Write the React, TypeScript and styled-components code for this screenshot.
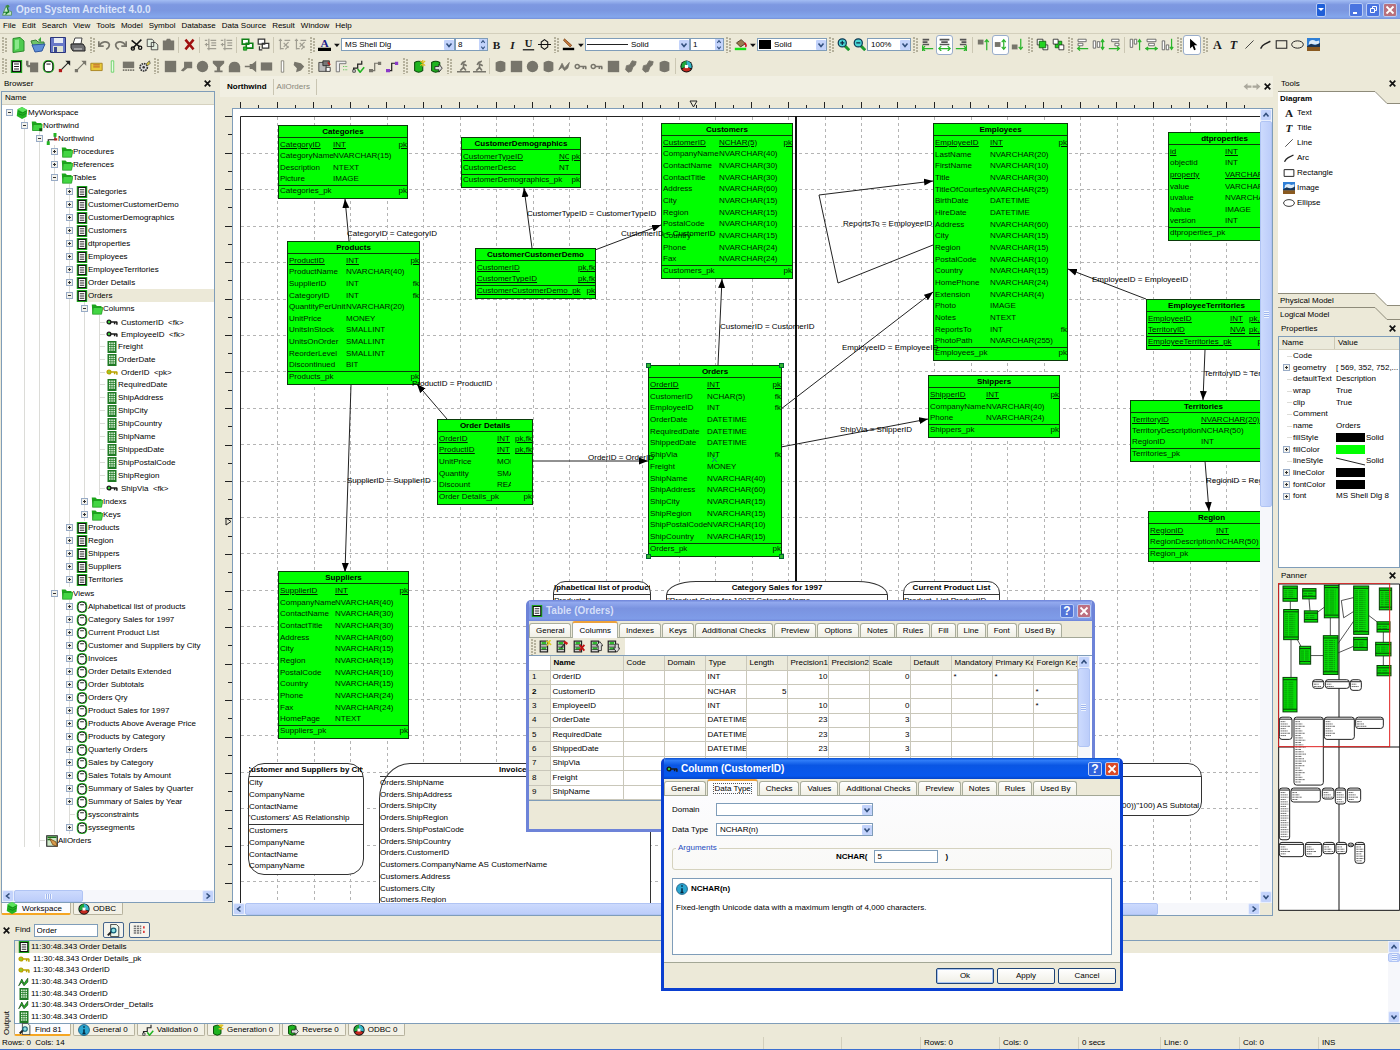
import React from "react";
import styled, { createGlobalStyle, css } from "styled-components";

/* ---------- theme ---------- */
const FONT = `"Liberation Sans", Arial, sans-serif`;
const TEXT = "8px";
const BEIGE = "#ece9d8";
const EDGE = "#7f9db9";
const LIME = "#00ff00";
const GREY = "#77756b";

const Global = createGlobalStyle`
  * { box-sizing: border-box; }
  body { margin: 0; background: ${BEIGE}; }
  button, input, select { font: inherit; color: inherit; margin: 0; padding: 0; border: 0; background: none; border-radius: 0; }
  ul { list-style: none; margin: 0; padding: 0; }
`;

const Shell = styled.div`
  display: flex;
  flex-direction: column;
  height: 100vh;
  min-width: 1000px;
  overflow: hidden;
  position: relative;
  background: ${BEIGE};
  border-bottom: 1px solid #3c6fd0;
  color: #000;
  font: ${TEXT} / 12px ${FONT};
  white-space: nowrap;
`;

/* ---------- icons ---------- */
const sheet = (
  <>
    <path d="M1.500 1.500h9v13h-9z" fill="#fff" stroke="#222" strokeWidth="1.500" />
    <path d="M3 2.500h6v3H3zM3 9h6v3H3z" fill="#2fb62f" />
    <path d="M2 6h8M2 8.500h8M2 12h8" stroke="#222" />
  </>
);
const keyShape = (body: string, head: string) => (
  <>
    <circle cx="4" cy="8" r="2.500" fill={head} stroke={body} strokeWidth="1.800" />
    <path d="M6.500 8H15M14.500 8v3.500M11.500 8v3" stroke={body} strokeWidth="2" fill="none" />
  </>
);
const letter = (ch: string, opts: { italic?: boolean; size?: number; y?: number; fill?: string } = {}) => (
  <text
    x="8"
    y={opts.y || 13}
    textAnchor="middle"
    fontFamily="Liberation Serif, Times New Roman, serif"
    fontWeight="bold"
    fontStyle={opts.italic ? "italic" : "normal"}
    fontSize={opts.size || 15}
    fill={opts.fill || "#1a1a1a"}
  >
    {ch}
  </text>
);

const glyphs: Record<string, React.ReactNode> = {
  logo: (
    <>
      <path d="M2 15L7 2l3 7 4 1v5z" fill="#bfe8c4" stroke="#4b8a52" />
      <path d="M8 3l2 7-4 4M3 11h8" stroke="#147a24" fill="none" strokeWidth="1.500" />
      <circle cx="9" cy="3" r="2" fill="#3b8d44" />
    </>
  ),
  newDoc: (
    <>
      <path d="M3 1.500l7-1L14 4v10l-11 1.500z" fill="#4fcb4f" stroke="#2c8a2c" />
      <path d="M5 3l4-.5v9L5 13z" fill="#8be88b" />
    </>
  ),
  open: (
    <>
      <path d="M1 4l5-1 2 2h6v4H3z" fill="#6fc46a" stroke="#3a7d3a" />
      <path d="M8 3l3-3v5z" fill="#39a839" />
      <path d="M5 15L2 8l13-1-3 7z" fill="#5f8fd8" stroke="#2f57a0" />
    </>
  ),
  save: (
    <>
      <path d="M.5.5h15v15H.5z" fill="#6878c8" stroke="#2b367c" />
      <path d="M4 1h9v5H4z" fill="#e8ecf4" />
      <path d="M3 9h10v6H3z" fill="#dfe3d2" />
      <path d="M4 10h3v5H4z" fill="#3c4a90" />
    </>
  ),
  print: (
    <>
      <path d="M5 1h7l-1 6H3z" fill="#fff" stroke="#444" />
      <path d="M1 7h12l2 3v4H3l-2-3z" fill="#6f6f72" stroke="#222" />
      <path d="M4 12h8" stroke="#d8d8d8" />
    </>
  ),
  undo: <path d="M1 4v6h6M2 9c2-5 10-6 12-1 0 3-2 5-4 6" stroke={GREY} strokeWidth="2" fill="none" />,
  redo: <path d="M15 4v6H9M14 9C12 4 4 3 2 8c0 3 2 5 4 6" stroke={GREY} strokeWidth="2" fill="none" />,
  cut: (
    <>
      <path d="M2 3l10 8M3 13L14 2" stroke="#111" strokeWidth="1.800" />
      <circle cx="3.500" cy="13" r="2" fill="none" stroke="#111" strokeWidth="1.600" />
      <circle cx="12.500" cy="12" r="2" fill="none" stroke="#111" strokeWidth="1.600" />
    </>
  ),
  copy: <path d="M1.500 1.500h6l2 2v7h-8zM6.500 5.500h5l3 3v6h-8z" fill="#e4efe0" stroke="#333" />,
  paste: <path d="M1 3h4l1-2h4l1 2h4v12H1z" fill={GREY} />,
  del: <path d="M3 2l10 12M13 2L3 14" stroke="#a01010" strokeWidth="3" />,
  indent: <path d="M1 3h3M1 8h5M3 6v4M8 3h7M9 6h6M9 9h6M4 13h11M6 1v14" stroke="#a09e92" strokeWidth="1.500" />,
  winGreen: (
    <>
      <path d="M1.500 1.500h8v6h-8zM6.500 6.500h8v6h-8z" fill="#fff" stroke="#108018" strokeWidth="2" />
      <path d="M3 11v4h4v-4z" fill="#29c029" stroke="#108018" />
    </>
  ),
  winWhite: <path d="M1.500 1.500h8v6h-8zM6.500 6.500h8v6h-8zM3 10v4.500h3.500" fill="#fff" stroke="#333" strokeWidth="1.500" />,
  outline: <path d="M1 3h4M3 1v13M3 13h4M9 14l4-4M8 3h7M7 6l6 6M13 5L7 11" stroke="#a09e92" strokeWidth="1.500" fill="none" />,
  fontColor: (
    <>
      {letter("A", { size: 14, y: 11, fill: "#1b1b8a" })}
      <path d="M0 12h16v4H0z" fill="#000" />
    </>
  ),
  bold: letter("B", { size: 14 }),
  italic: letter("I", { size: 14, italic: true }),
  underline: (
    <>
      {letter("U", { size: 13, y: 11 })}
      <path d="M1 14.500h14" stroke="#111" strokeWidth="1.500" />
    </>
  ),
  strike: <path d="M0 8h16M8 2l4 3v6l-4 3-4-3V5z" stroke="#111" strokeWidth="1.300" fill="none" />,
  brush: (
    <>
      <path d="M3 1l9 8-2 2-8-8z" fill="#c77a3c" stroke="#7c4417" />
      <path d="M1 12h14v3H1z" fill="#000" />
    </>
  ),
  bucket: (
    <>
      <path d="M3 6l6-4 5 5-6 4z" fill="#9b7a52" stroke="#3e2b14" />
      <path d="M13 6q3 3 1 5" stroke="#c12" strokeWidth="2" fill="none" />
      <path d="M1 12h14v3H1z" fill="#18e018" />
    </>
  ),
  zoomIn: (
    <>
      <path d="M10 10l5 5" stroke="#1d9a2e" strokeWidth="3.500" />
      <circle cx="6.500" cy="6" r="5" fill="#49d6d6" stroke="#0d3550" strokeWidth="1.500" />
      <path d="M4 6h5M6.500 3.500v5" stroke="#0d2540" strokeWidth="1.500" />
    </>
  ),
  zoomOut: (
    <>
      <path d="M10 10l5 5" stroke="#1d9a2e" strokeWidth="3.500" />
      <circle cx="6.500" cy="6" r="5" fill="#49d6d6" stroke="#0d3550" strokeWidth="1.500" />
      <path d="M4 6h5" stroke="#0d2540" strokeWidth="1.500" />
    </>
  ),
  txtLeft: <><path d="M2 2h8M2 5h6M2 8h8" stroke="#555" strokeWidth="2" /><path d="M15 13H2M5 10l-3 3 3 3M2 9v7" stroke="#2bb52b" strokeWidth="1.500" fill="none" /></>,
  txtMid: <><path d="M2 2h12M4 5h8M2 8h12" stroke="#555" strokeWidth="2" /><path d="M1 13h14M4 10l-3 3 3 3M12 10l3 3-3 3" stroke="#2bb52b" strokeWidth="1.500" fill="none" /></>,
  txtRight: <><path d="M6 2h8M8 5h6M6 8h8" stroke="#555" strokeWidth="2" /><path d="M1 13h13M11 10l3 3-3 3M14 9v7" stroke="#2bb52b" strokeWidth="1.500" fill="none" /></>,
  vTop: <><path d="M1 2h7v6H1z" fill={GREY} /><path d="M12 15V2M9.500 5L12 2l2.500 3" stroke="#2bb52b" strokeWidth="1.500" fill="none" /></>,
  vMid: <><path d="M1 5h7v6H1z" fill={GREY} /><path d="M12 14V2M9.500 5L12 2l2.500 3M9.500 11l2.500 3 2.500-3" stroke="#2bb52b" strokeWidth="1.500" fill="none" /></>,
  vBot: <><path d="M1 8h7v6H1z" fill={GREY} /><path d="M12 1v13M9.500 11l2.500 3 2.500-3" stroke="#2bb52b" strokeWidth="1.500" fill="none" /></>,
  front: <><path d="M1.500 1.500h7v7h-7zM8.500 8.500h6v6h-6z" fill="#fff" stroke="#222" /><path d="M4 4h8v8H4z" fill="#22d322" stroke="#0d5c0d" /></>,
  back: <><path d="M4 4h8v8H4z" fill="#22d322" stroke="#0d5c0d" /><path d="M1.500 1.500h6v6h-6zM8.500 8.500h6v6h-6z" fill="#fff" stroke="#222" /></>,
  aLeft: <><path d="M2.500 1.500h10v3h-10zM2.500 6.500h6v3h-6z" fill="#fff" stroke="#555" /><path d="M15 13H2M5 10.500L2 13l3 2.500" stroke="#2bb52b" strokeWidth="1.500" fill="none" /></>,
  aMidH: <><path d="M1.500 3.500h3v9h-3zM6.500 4.500h3v7h-3z" fill="#fff" stroke="#555" /><path d="M13 14V2M11 5l2-3 2 3M11 11l2 3 2-3" stroke="#2bb52b" strokeWidth="1.500" fill="none" /></>,
  aRight: <><path d="M4.500 1.500h9v3h-9zM8.500 6.500h5v3h-5z" fill="#fff" stroke="#555" /><path d="M1 13h13M11 10.500l3 2.500-3 2.500" stroke="#2bb52b" strokeWidth="1.500" fill="none" /></>,
  aTop: <><path d="M1.500 1.500h3v10h-3zM6.500 1.500h3v6h-3z" fill="#fff" stroke="#555" /><path d="M13 15V2M11 5l2-3 2 3" stroke="#2bb52b" strokeWidth="1.500" fill="none" /></>,
  aCenter: <><path d="M2.500 1.500h11v3h-11zM4.500 6.500h7v3h-7z" fill="#fff" stroke="#555" /><path d="M1 13h14M4 11l-3 2 3 2M12 11l3 2-3 2" stroke="#2bb52b" strokeWidth="1.500" fill="none" /></>,
  aBottom: <><path d="M1.500 3.500h3v11h-3zM6.500 8.500h3v6h-3z" fill="#fff" stroke="#555" /><path d="M13 1v13M11 11l2 3 2-3" stroke="#2bb52b" strokeWidth="1.500" fill="none" /></>,
  pointer: <path d="M5 1v12l3-3 2 5 2-1-2-5h4z" fill="#000" />,
  text: letter("A"),
  title: letter("T", { italic: true }),
  line: <path d="M3 13L13 3" stroke="#222" />,
  arc: <path d="M2 13q2-4 5-5.500t7-3.500" stroke="#222" strokeWidth="1.800" fill="none" />,
  rect: <path d="M1.500 3.500h13v9h-13z" stroke="#222" strokeWidth="1.300" fill="none" />,
  ellipse: <ellipse cx="8" cy="8" rx="7.200" ry="4.500" stroke="#222" strokeWidth="1.200" fill="none" />,
  image: (
    <>
      <path d="M0 0h16v16H0z" fill="#2f7fd6" />
      <path d="M3 4q4-3 8 0l4-1v5H2z" fill="#dcebf8" />
      <path d="M0 10l5-3 5 2 6-3v5H0z" fill="#193454" />
      <path d="M0 11h16v5H0z" fill="#8a5a20" />
    </>
  ),
  table: (
    <>
      <path d="M1 0h14v16H1z" fill="#1ea61e" />
      <path d="M3 2h10v12H3z" fill="#fff" stroke="#111" strokeWidth="1.400" />
      <path d="M5 5h6M5 8h6M5 11h6" stroke="#222" strokeWidth="1.300" />
    </>
  ),
  view: (
    <>
      <rect x="1" y="0" width="14" height="16" rx="6" fill="#2fc42f" />
      <rect x="2.700" y="1.500" width="10.600" height="13" rx="4.500" fill="#fff" stroke="#111" strokeWidth="1.300" />
      <path d="M5.500 5h5" stroke="#222" strokeWidth="1.300" />
    </>
  ),
  folder: (
    <>
      <path d="M1 2h5l2 2h6v10H2z" fill="#1da51d" />
      <path d="M3 6h13l-2 9H2z" fill="#43d543" stroke="#128a12" strokeWidth=".8" />
    </>
  ),
  project: (
    <>
      <path d="M1 2h5l2 2h6v10H2z" fill="#1da51d" />
      <path d="M3 6h12l-1 8H2z" fill="#43d543" stroke="#128a12" strokeWidth=".8" />
      <path d="M11 11h4v4h-4z" fill="#0b4d0b" />
    </>
  ),
  cube: (
    <>
      <path d="M8 0l7 4-1 9-6 3-7-4 1-9z" fill="#22b422" />
      <path d="M8 0l7 4-6 3-7-4z" fill="#5be35b" />
      <path d="M3 9l6 2 5-3M3 6l6 2 5-3" stroke="#0d7d16" fill="none" />
    </>
  ),
  model: (
    <>
      <path d="M3 13V9h9V3" stroke="#222" strokeWidth="1.500" fill="none" />
      <path d="M1 11h4v5H1zM10 0h4v5h-4z" fill="#22b422" />
      <path d="M11 7h4v3h-4z" fill="#b22" />
    </>
  ),
  column: (
    <>
      <path d="M2 0h12v16H2z" fill="#1f7a24" />
      <path d="M4 2h2v2H4zM7 2h2v2H7zM10 2h2v2h-2zM4 5h2v2H4zM7 5h2v2H7zM10 5h2v2h-2zM4 8h2v2H4zM7 8h2v2H7zM10 8h2v2h-2zM4 11h2v2H4zM7 11h2v2H7zM10 11h2v2h-2z" fill="#dff3dc" />
    </>
  ),
  keyBlack: keyShape("#1a1a1a", "#3bcf3b"),
  keyGold: keyShape("#b9a300", "#8fcf2b"),
  keyGrey: keyShape(GREY, BEIGE),
  query: (
    <>
      <path d="M1 1h14v14H1z" fill="#cfe8c8" stroke="#222" strokeWidth="1.500" />
      <path d="M2 3h12M2 6h5" stroke="#187018" strokeWidth="2" />
      <path d="M5 5l8 4 2 6-6-2z" fill="#d99b4c" stroke="#70400f" />
    </>
  ),
  odbc: (
    <>
      <circle cx="8" cy="8" r="7.500" fill="#111" />
      <path d="M8 1a7 7 0 0 0-6 9l4-1 2-4z" fill="#1fa83a" />
      <path d="M8 1a7 7 0 0 1 6 9l-4-1-2-4z" fill="#35b8c8" />
      <path d="M2.500 11.500a7 7 0 0 0 11 0L10 9H6z" fill="#c42a20" />
      <path d="M6 6h4v4H6z" fill="#fff" />
    </>
  ),
  link: <><path d="M3 13L13 3" stroke="#222" strokeWidth="1.300" /><path d="M1 11h4v4H1z" fill="#b01818" /><path d="M9 1h6v6z" fill="#222" /></>,
  linkGrey: <><path d="M3 13L13 3" stroke={GREY} strokeWidth="1.300" /><path d="M1 11h4v4H1zM9 1h6v6z" fill={GREY} /></>,
  tableGrey: <path d="M0 1h3v5h2V3h10v12H5V9H2L0 6z" fill={GREY} />,
  ticket: <><path d="M1 4h14v9H1z" fill="#e8c93a" stroke="#a17a16" /><path d="M4 6h8M4 8.500h8" stroke="#b5402a" /></>,
  bar: <path d="M6.500 1h3v14h-3z" fill="#eaf9e6" stroke="#59cf59" />,
  barGrey: <path d="M6.500 1h3v14h-3z" fill="#fff" stroke={GREY} />,
  gridGrey: <><path d="M1 2h14v8H1z" fill={GREY} /><path d="M1 12.500h14" stroke={GREY} strokeWidth="2" strokeDasharray="2 1" /></>,
  gear: <><circle cx="7" cy="9" r="4.500" fill="#ddd" stroke="#333" strokeWidth="2" strokeDasharray="2 1" /><circle cx="7" cy="9" r="1.500" fill="#333" /><path d="M10 5l4-4 1 3-3 3z" fill="#d8c63a" stroke="#555" /></>,
  gSquare: <path d="M1 1h14v14H1z" fill={GREY} />,
  gFlag: <path d="M5 2h10v8H9l-5 4-3-1 4-4z" fill={GREY} />,
  gCircle: <circle cx="8" cy="8" r="7" fill={GREY} />,
  gFunnel: <path d="M1 1h14v3l-5 5v4h3v2H3v-2h3V9L1 4z" fill={GREY} />,
  gDome: <path d="M1 15V8q1-6 7-6t7 6v7z" fill={GREY} />,
  gStep: <path d="M1 7h6V5h3l5-4v14l-5-4H7V9H1z" fill={GREY} />,
  gWide: <path d="M1 3h14v10H1z" fill={GREY} />,
  gBlob: <path d="M3 2l8 2 4 4-4 5-6 2 1-5-4-4z" fill={GREY} />,
  gCan: <path d="M2 3q6-4 12 0v10q-6 4-12 0z" fill={GREY} />,
  gZig: <path d="M1 12l4-8 3 6 6-7-2 7-4 3-3-4z" fill={GREY} stroke={GREY} />,
  person: <path d="M10 2l-3 1-2 3M8 4v5l-4 4M8 9l3 4M8 5l4 2M0 14.500h16M10 1.500h1" stroke={GREY} strokeWidth="2" fill="none" />,
  bug: <path d="M10 1l5 1-1 4-3 3-2 5-4 1-3-3 1-5 4-1z" fill={GREY} stroke={GREY} />,
  compile: <><path d="M1 3h9v11H1z" fill="#bbb" stroke="#333" /><path d="M6 1h8v6H6z" fill="#777" stroke="#222" /><path d="M10 9h5v5h-5z" fill="#fff" stroke="#222" /><path d="M12 3l3 3" stroke="#b22" strokeWidth="2" /></>,
  rulers: <><path d="M1.500 1.500h12v3h-8v10h-4z" fill="#eee" stroke="#666" /><path d="M10 8h5M10 12h5" stroke="#2bb52b" strokeDasharray="1 1" /></>,
  relCheck: <><path d="M2 14v-4h5V5h5V1" stroke="#222" strokeWidth="1.500" fill="none" /><path d="M1 12h3v3H1z" fill="#fff" stroke="#222" /><path d="M7 11l3 4 5-6" stroke="#22b422" strokeWidth="2" fill="none" /></>,
  relGrey: <><path d="M2 13h5V4h6" stroke={GREY} strokeWidth="1.500" fill="none" /><path d="M0 11h5v4H0zM11 2h4v4h-4z" fill={GREY} /></>,
  relPurple: <><path d="M2 13h5V4h6" stroke="#222" strokeWidth="1.500" fill="none" /><path d="M0 11h5v4H0zM11 2h4v4h-4z" fill="#8a3ac8" /></>,
  dbNew: <><path d="M2 3q5-3 10 0v10q-5 4-10 0z" fill="#1fb31f" stroke="#0b4d0b" strokeWidth="1.300" /><path d="M9 1l6 6M15 1L9 7M12 0v8" stroke="#e0c020" strokeWidth="1.500" /></>,
  dbRev: <><path d="M2 3q5-3 10 0v10q-5 4-10 0z" fill="#1fb31f" stroke="#0b4d0b" strokeWidth="1.300" /><path d="M6 8h5V5l4 5-4 5v-3H6z" fill="#ddd" stroke="#222" /></>,
  zig: <path d="M1 13l4-9 3 6 5-7v5l-5 5-3-5z" fill="#25b325" stroke="#154d15" />,
  info: <><circle cx="8" cy="8" r="7.300" fill="#2ba5cf" stroke="#0d4f78" /><path d="M8 3v2M8 7v5M6 12.500h4" stroke="#05263d" strokeWidth="2" /></>,
  find: <><path d="M4.500.5h7l3 3v12h-10z" fill="#eef7ec" stroke="#222" /><path d="M1 14l5-5" stroke="#222" strokeWidth="2.500" /><circle cx="8" cy="8" r="3" fill="#8fe0e0" stroke="#17607a" strokeWidth="1.500" /></>,
  findCfg: <><path d="M1 3h10M1 6h10M1 9h10M1 12h10" stroke="#777" strokeWidth="2" strokeDasharray="3 1" /><path d="M14.500 3v3M14.500 9v3" stroke="#d22" strokeWidth="2" /></>,
  sheetNew: <>{sheet}<path d="M9 1l6 5M14 0l-4 7" stroke="#e0d020" strokeWidth="1.800" /></>,
  sheetEdit: <>{sheet}<path d="M6 10l6-7" stroke="#333" strokeWidth="1.500" /><path d="M10 2l4 3" stroke="#d01818" strokeWidth="3" /></>,
  sheetDel: <>{sheet}<path d="M8 6l6 7M14 6l-6 7" stroke="#c01010" strokeWidth="2.200" /></>,
  sheetUp: <>{sheet}<path d="M10 13V7H8l4-5 4 5h-2v6z" fill="#ddd" stroke="#222" /></>,
  sheetDown: <>{sheet}<path d="M10 5v5H8l4 5 4-5h-2V5z" fill="#ddd" stroke="#222" /></>,
  close: <path d="M3 3l10 10M13 3L3 13" stroke="#111" strokeWidth="3" />,
  prev: <path d="M15 6H8V2L1 8l7 6v-4h7z" fill="#aaa89c" />,
  next: <path d="M1 6h7V2l7 6-7 6v-4H1z" fill="#aaa89c" />,
  down: <path d="M5 7h7l-3.500 4z" fill="#111" />,
};

const Svg = styled.svg<{ $size: number }>`
  display: block;
  flex: none;
  width: ${(p) => p.$size}px;
  height: ${(p) => p.$size}px;
`;
const Icon = ({ name, size = 14 }: { name: string; size?: number }) => (
  <Svg $size={size} viewBox="0 0 16 16" aria-hidden="true">
    {glyphs[name]}
  </Svg>
);

/* ---------- title and menu ---------- */
const TitleBar = styled.header`
  flex: none;
  height: 19px;
  display: flex;
  align-items: center;
  gap: 3px;
  padding: 0 3px 0 1px;
  background: linear-gradient(#a3bdf3, #7d98e1 25%, #7b97e0 55%, #84a7ec 90%, #7590d8);
`;
const TitleText = styled.h1`
  margin: 0;
  flex: 1;
  font: bold 10px / 14px ${FONT};
  color: #dbe5fa;
`;
const WinButton = styled.button<{ $tone?: string; $w?: number }>`
  width: ${(p) => p.$w || 14}px;
  height: 14px;
  flex: none;
  display: flex;
  align-items: center;
  justify-content: center;
  border: 1px solid #b9ccf5;
  border-radius: 2px;
  background: ${(p) => p.$tone || "#4a74e0"};
`;
const Gap = styled.span<{ $w: number }>`
  flex: none;
  width: ${(p) => p.$w}px;
`;
const MenuBar = styled.nav`
  flex: none;
  height: 14px;
  display: flex;
  align-items: center;
  gap: 6px;
  padding-left: 3px;
`;

/* ---------- tool bars ---------- */
const ToolRow = styled.div<{ $h: number; $line?: boolean }>`
  flex: none;
  height: ${(p) => p.$h}px;
  display: flex;
  align-items: center;
  border-top: 1px solid ${(p) => (p.$line ? "#d3cfbc" : "transparent")};
`;
const Grip = styled.span<{ $w?: number }>`
  flex: none;
  width: ${(p) => p.$w || 8}px;
  height: 16px;
  background: radial-gradient(circle at 1px 1px, #b5b19c 1px, transparent 1px) 2px 0 / 3px 3px repeat-y,
    radial-gradient(circle at 1px 1px, #b5b19c 1px, transparent 1px) 5px 1px / 3px 3px repeat-y;
`;
const Divider = styled.span`
  flex: none;
  width: 1px;
  height: 16px;
  margin: 0 2px;
  background: #cbc7b3;
`;
const ToolButton = styled.button<{ $w?: number; $on?: boolean }>`
  flex: none;
  width: ${(p) => p.$w || 16}px;
  height: 20px;
  display: flex;
  align-items: center;
  justify-content: center;
  ${(p) =>
    p.$on &&
    css`
      background: #fff;
      border: 1px solid #9aaecb;
      border-radius: 3px;
    `}
`;
const Tools = ({ names, w, on }: { names: string; w?: number; on?: string }) => (
  <>
    {names.split(" ").map((n, i) => (
      <ToolButton key={i} $w={w} $on={on === n} aria-label={n}>
        <Icon name={n} size={w === 20 ? 16 : 13} />
      </ToolButton>
    ))}
  </>
);

const Frame = styled.span<{ $w: number }>`
  flex: none;
  display: flex;
  align-items: center;
  width: ${(p) => p.$w}px;
  height: 13px;
  border: 1px solid ${EDGE};
  background: #fff;
  line-height: 11px;
`;
const NativeSelect = styled.select`
  appearance: none;
  flex: 1;
  min-width: 0;
  height: 11px;
  padding-left: 3px;
  line-height: 11px;
`;
const ArrowBox = styled.span`
  flex: none;
  width: 10px;
  height: 10px;
  display: flex;
  align-items: center;
  justify-content: center;
  border-radius: 1px;
  background: #c3d3fb;
`;
const Chevron = ({ turn = 0 }: { turn?: number }) => (
  <svg width="8" height="8" viewBox="0 0 8 8" aria-hidden="true">
    <path d="M1.500 2.500L4 5.500l2.500-3" transform={`rotate(${turn} 4 4)`} fill="none" stroke="#33507e" strokeWidth="1.600" />
  </svg>
);
const Combo = ({ w, label, value, lead }: { w: number; label: string; value: string; lead?: React.ReactNode }) => (
  <Frame $w={w}>
    {lead}
    <NativeSelect aria-label={label} defaultValue={value}>
      <option>{value}</option>
    </NativeSelect>
    <ArrowBox>
      <Chevron />
    </ArrowBox>
  </Frame>
);
const SpinInput = styled.input`
  flex: 1;
  min-width: 0;
  height: 11px;
  padding-left: 2px;
`;
const SpinArrows = styled.span`
  display: flex;
  flex-direction: column;
  align-items: center;
  width: 8px;
  height: 11px;
  background: #c3d3fb;
  overflow: hidden;
  svg { height: 6px; }
`;
const Spin = ({ w, label, value }: { w: number; label: string; value: string }) => (
  <Frame $w={w}>
    <SpinInput aria-label={label} defaultValue={value} />
    <SpinArrows>
      <Chevron turn={180} />
      <Chevron />
    </SpinArrows>
  </Frame>
);
const Swatch = styled.span<{ $c: string; $w?: number }>`
  flex: none;
  width: ${(p) => p.$w || 12}px;
  height: 9px;
  margin-left: ${(p) => (p.$w ? 0 : 1)}px;
  background: ${(p) => p.$c};
`;

/* ---------- scroll bars ---------- */
const ScrollTrack = styled.div<{ $v?: boolean }>`
  flex: none;
  display: flex;
  flex-direction: ${(p) => (p.$v ? "column" : "row")};
  ${(p) => (p.$v ? "width: 12px;" : "height: 12px;")}
  background: #f6f7fb;
`;
const ScrollEnd = styled.button`
  flex: none;
  width: 12px;
  height: 12px;
  display: flex;
  align-items: center;
  justify-content: center;
  border: 1px solid #e9effd;
  border-radius: 2px;
  background: #c3d3fb;
`;
const Thumb = styled.div<{ $v?: boolean; $part: number }>`
  flex: ${(p) => p.$part} 1 0;
  border: 1px solid #b0c4f4;
  border-radius: 2px;
  background: ${(p) =>
    p.$v
      ? "repeating-linear-gradient(#eef4fe 0 1px, #9fb6ee 1px 2px) center / 5px 7px no-repeat, linear-gradient(to right, #ccdafd, #bccdfa)"
      : "repeating-linear-gradient(to right, #eef4fe 0 1px, #9fb6ee 1px 2px) center / 7px 5px no-repeat, linear-gradient(#ccdafd, #bccdfa)"};
`;
const Rest = styled.div<{ $part: number }>`
  flex: ${(p) => p.$part} 1 0;
`;
const ScrollBar = ({ v, part }: { v?: boolean; part: number }) => (
  <ScrollTrack $v={v}>
    <ScrollEnd aria-label="Scroll back">
      <Chevron turn={v ? 180 : 90} />
    </ScrollEnd>
    <Thumb $v={v} $part={part} />
    <Rest $part={100 - part} />
    <ScrollEnd aria-label="Scroll forward">
      <Chevron turn={v ? 0 : -90} />
    </ScrollEnd>
  </ScrollTrack>
);

/* ---------- docks ---------- */
const Main = styled.div`
  flex: 1;
  min-height: 0;
  display: flex;
`;
const LeftDock = styled.aside`
  flex: none;
  width: 216px;
  display: flex;
  flex-direction: column;
  padding: 0 1px 5px;
`;
const DockTitle = styled.h2`
  flex: none;
  height: 15px;
  margin: 0;
  padding: 0 3px;
  display: flex;
  align-items: center;
  justify-content: space-between;
  font: ${TEXT} / 15px ${FONT};
`;
const IconButton = styled.button`
  display: flex;
  align-items: center;
`;
const Dock = ({ title }: { title: string }) => (
  <DockTitle>
    {title}
    <IconButton aria-label={`Close ${title}`}>
      <Icon name="close" size={9} />
    </IconButton>
  </DockTitle>
);
const Panel = styled.div`
  flex: 1;
  min-height: 0;
  display: flex;
  flex-direction: column;
  border: 1px solid ${EDGE};
  background: #fff;
`;
const PanelHead = styled.div`
  flex: none;
  height: 13px;
  display: flex;
  align-items: center;
  padding-left: 3px;
  background: #ebeadb;
  border-bottom: 1px solid #d5d1bf;
`;

/* ---------- tree ---------- */
const TreeScroll = styled.div`
  flex: 1;
  min-height: 0;
  overflow: hidden;
  padding: 1px 0 0 8px;
`;
const Branch = styled.ul<{ $nested?: boolean; $pad?: boolean }>`
  ${(p) =>
    p.$nested &&
    css`
      margin-left: 14px;
      border-left: 1px solid #dcdcd8;
    `}
  ${(p) => p.$pad && "padding: 1px 0;"}
`;
const TreeRow = styled.div<{ $h: number }>`
  display: flex;
  align-items: center;
  height: ${(p) => p.$h}px;
  margin-left: -4px;
`;
const Expander = styled.button`
  flex: none;
  width: 7px;
  height: 7px;
  border: 1px solid #98abc6;
  background: linear-gradient(#333, #333) center / 3px 1px no-repeat, #f3f2ec;
  &[aria-expanded="false"] {
    background: linear-gradient(#333, #333) center / 3px 1px no-repeat, linear-gradient(#333, #333) center / 1px 3px no-repeat, #f3f2ec;
  }
`;
const Twig = styled.span`
  flex: none;
  width: 5px;
  height: 1px;
  margin-right: 1px;
  background: #dcdcd8;
`;
const NodeText = styled.span<{ $sel?: boolean; $key?: boolean }>`
  flex: 1;
  padding-left: ${(p) => (p.$key ? 3 : 0)}px;
  line-height: 13px;
  white-space: pre;
  background: ${(p) => (p.$sel ? BEIGE : "transparent")};
`;
type Item = { t: string; icon: string; leaf?: boolean; sel?: boolean; pad?: boolean; kids?: Item[] };
const list = (icon: string, s: string): Item[] => s.split("|").map((t) => ({ t, icon }));
const col = (t: string): Item => ({
  t,
  icon: t.includes("<fk>") ? "keyBlack" : t.includes("<pk>") ? "keyGold" : "column",
  leaf: true,
});
const tree: Item[] = [
  {
    t: "MyWorkspace", icon: "cube", kids: [
      {
        t: "Northwind", icon: "project", kids: [
          {
            t: "Northwind", icon: "model", kids: [
              ...list("folder", "Procedures|References"),
              {
                t: "Tables", icon: "folder", pad: true, kids: [
                  ...list("table", "Categories|CustomerCustomerDemo|CustomerDemographics|Customers|dtproperties|Employees|EmployeeTerritories|Order Details"),
                  {
                    t: "Orders", icon: "table", sel: true, kids: [
                      {
                        t: "Columns", icon: "folder", pad: true,
                        kids: "CustomerID  <fk>|EmployeeID  <fk>|Freight|OrderDate|OrderID  <pk>|RequiredDate|ShipAddress|ShipCity|ShipCountry|ShipName|ShippedDate|ShipPostalCode|ShipRegion|ShipVia  <fk>".split("|").map(col),
                      },
                      ...list("folder", "Indexs|Keys"),
                    ],
                  },
                  ...list("table", "Products|Region|Shippers|Suppliers|Territories"),
                ],
              },
              {
                t: "Views", icon: "folder", kids: [
                  ...list("view", "Alphabetical list of products|Category Sales for 1997|Current Product List|Customer and Suppliers by City|Invoices|Order Details Extended|Order Subtotals|Orders Qry|Product Sales for 1997|Products Above Average Price|Products by Category|Quarterly Orders|Sales by Category|Sales Totals by Amount|Summary of Sales by Quarter|Summary of Sales by Year"),
                  { t: "sysconstraints", icon: "view", leaf: true },
                  { t: "syssegments", icon: "view" },
                ],
              },
            ],
          },
          { t: "AllOrders", icon: "query", leaf: true },
        ],
      },
    ],
  },
];
const TreeList = ({ items, nested, pad }: { items: Item[]; nested?: boolean; pad?: boolean }) => (
  <Branch $nested={nested} $pad={pad}>
    {items.map((it, i) => {
      const isKey = it.icon.startsWith("key");
      return (
        <li key={i}>
          <TreeRow $h={isKey ? 12 : 13}>
            {it.leaf ? <Gap $w={4} /> : <Expander aria-label={it.t} aria-expanded={!!it.kids} />}
            {it.leaf ? <Twig /> : <Gap $w={3} />}
            <Icon name={it.icon} size={12} />
            <NodeText $sel={it.sel} $key={isKey}>{it.t}</NodeText>
          </TreeRow>
          {it.kids && <TreeList items={it.kids} nested pad={it.pad} />}
        </li>
      );
    })}
  </Branch>
);

/* ---------- bottom tabs ---------- */
const TabStrip = styled.div`
  flex: none;
  height: 12px;
  display: flex;
  gap: 2px;
`;
const BottomTab = styled.button<{ $on?: boolean }>`
  display: flex;
  align-items: center;
  gap: ${(p) => (p.$on ? 4 : 3)}px;
  padding: 0 ${(p) => (p.$on ? 8 : 6)}px 0 4px;
  height: 12px;
  border: 1px solid #b6b29d;
  border-top: 0;
  border-bottom: ${(p) => (p.$on ? "2px solid #f5a623" : "1px solid #b6b29d")};
  border-radius: 0 0 2px 2px;
  background: ${(p) => (p.$on ? "#fcfcfe" : "#f3f1e6")};
  line-height: 11px;
`;

/* ---------- document area ---------- */
const Center = styled.main`
  flex: 1;
  min-width: 0;
  display: flex;
  flex-direction: column;
  margin-right: 5px;
  padding-bottom: 4px;
`;
const DocTabs = styled.div`
  flex: none;
  height: 21px;
  margin-left: 4px;
  display: flex;
  align-items: center;
  padding-right: 1px;
  background: #f1efe2;
`;
const DocTab = styled.button<{ $on?: boolean }>`
  height: 16px;
  padding: 0 6px 0 ${(p) => (p.$on ? 7 : 3)}px;
  border-right: 1px solid #c9c5b2;
  font-weight: ${(p) => (p.$on ? "bold" : "normal")};
  color: ${(p) => (p.$on ? "#000" : "#8a887c")};
`;
const Spacer = styled.span`
  flex: 1;
`;
const Drawing = styled.div`
  flex: 1;
  min-height: 0;
  display: grid;
  grid-template: 11px 1fr / 16px 1fr;
`;
const RulerSvg = styled.svg`
  display: block;
  width: 100%;
  height: 100%;
  overflow: hidden;
`;
const CanvasFrame = styled.div`
  min-width: 0;
  min-height: 0;
  display: grid;
  grid-template: 1fr 12px / 1fr 12px;
  border: 1px solid ${EDGE};
  background: ${BEIGE};
`;
const Viewport = styled.div`
  position: relative;
  overflow: hidden;
  background: #fff;
`;
/* The scene is scrolled so that the sheet's margin shows at the top left. */
const Scene = styled.div`
  position: absolute;
  left: -233px;
  top: -109px;
  width: 1400px;
  height: 1050px;
`;
const SceneSvg = styled.svg`
  position: absolute;
  left: 0;
  top: 0;
`;

const steps = (from: number, to: number, step: number) => {
  const out: number[] = [];
  for (let v = from; v < to; v += step) out.push(Math.round(v) + 0.5);
  return out;
};
const ticks = (max: number, at: (v: number, long: boolean) => string) =>
  steps(8, max, 18.25).map((v, i) => at(v, i % 2 === 0)).join("");

const entityRows = (s: string) => s.split("|").map((r) => r.split(";"));
type Entity = { t: string; x: number; y: number; w: number; h: number; tx: number; tw?: number; rows: string[][]; sel?: boolean; wideKey?: boolean };
const entities: Entity[] = [
  { t: "Categories", x: 278, y: 125, w: 130, h: 74, tx: 55, rows: entityRows("CategoryID;INT;pk|CategoryName;NVARCHAR(15)|Description;NTEXT|Picture;IMAGE") },
  { t: "CustomerDemographics", x: 461, y: 137, w: 120, h: 51, tx: 98, tw: 10, rows: entityRows("CustomerTypeID;NCHAR(10);pk|CustomerDesc;NTEXT") },
  { t: "Customers", x: 661, y: 123, w: 132, h: 156, tx: 58, rows: entityRows("CustomerID;NCHAR(5);pk|CompanyName;NVARCHAR(40)|ContactName;NVARCHAR(30)|ContactTitle;NVARCHAR(30)|Address;NVARCHAR(60)|City;NVARCHAR(15)|Region;NVARCHAR(15)|PostalCode;NVARCHAR(10)|Country;NVARCHAR(15)|Phone;NVARCHAR(24)|Fax;NVARCHAR(24)") },
  { t: "Employees", x: 933, y: 123, w: 135, h: 238, tx: 57, rows: entityRows("EmployeeID;INT;pk|LastName;NVARCHAR(20)|FirstName;NVARCHAR(10)|Title;NVARCHAR(30)|TitleOfCourtesy;NVARCHAR(25)|BirthDate;DATETIME|HireDate;DATETIME|Address;NVARCHAR(60)|City;NVARCHAR(15)|Region;NVARCHAR(15)|PostalCode;NVARCHAR(10)|Country;NVARCHAR(15)|HomePhone;NVARCHAR(24)|Extension;NVARCHAR(4)|Photo;IMAGE|Notes;NTEXT|ReportsTo;INT;fk|PhotoPath;NVARCHAR(255)") },
  { t: "dtproperties", x: 1168, y: 132, w: 113, h: 109, tx: 57, rows: entityRows("id;INT;pk|objectid;INT|property;VARCHAR(64);pk|value;VARCHAR(255)|uvalue;NVARCHAR(255)|lvalue;IMAGE|version;INT") },
  { t: "Products", x: 287, y: 241, w: 133, h: 144, tx: 59, rows: entityRows("ProductID;INT;pk|ProductName;NVARCHAR(40)|SupplierID;INT;fk|CategoryID;INT;fk|QuantityPerUnit;NVARCHAR(20)|UnitPrice;MONEY|UnitsInStock;SMALLINT|UnitsOnOrder;SMALLINT|ReorderLevel;SMALLINT|Discontinued;BIT") },
  { t: "CustomerCustomerDemo", x: 475, y: 248, w: 121, h: 51, tx: 90, tw: 1, wideKey: true, rows: entityRows("CustomerID;;pk,fk|CustomerTypeID;;pk,fk") },
  { t: "EmployeeTerritories", x: 1146, y: 299, w: 121, h: 51, tx: 84, tw: 15, wideKey: true, rows: entityRows("EmployeeID;INT;pk,fk|TerritoryID;NVARCHAR(20);pk,fk") },
  { t: "Orders", x: 648, y: 365, w: 134, h: 192, tx: 59, sel: true, rows: entityRows("OrderID;INT;pk|CustomerID;NCHAR(5);fk|EmployeeID;INT;fk|OrderDate;DATETIME|RequiredDate;DATETIME|ShippedDate;DATETIME|ShipVia;INT;fk|Freight;MONEY|ShipName;NVARCHAR(40)|ShipAddress;NVARCHAR(60)|ShipCity;NVARCHAR(15)|ShipRegion;NVARCHAR(15)|ShipPostalCode;NVARCHAR(10)|ShipCountry;NVARCHAR(15)") },
  { t: "Shippers", x: 928, y: 375, w: 132, h: 63, tx: 58, rows: entityRows("ShipperID;INT;pk|CompanyName;NVARCHAR(40)|Phone;NVARCHAR(24)") },
  { t: "Territories", x: 1130, y: 400, w: 147, h: 62, tx: 71, rows: entityRows("TerritoryID;NVARCHAR(20);pk|TerritoryDescription;NCHAR(50)|RegionID;INT;fk") },
  { t: "Order Details", x: 437, y: 419, w: 96, h: 86, tx: 60, tw: 14, rows: entityRows("OrderID;INT;pk,fk|ProductID;INT;pk,fk|UnitPrice;MONEY|Quantity;SMALLINT|Discount;REAL") },
  { t: "Region", x: 1148, y: 511, w: 127, h: 51, tx: 68, rows: entityRows("RegionID;INT;pk|RegionDescription;NCHAR(50)") },
  { t: "Suppliers", x: 278, y: 571, w: 131, h: 168, tx: 57, rows: entityRows("SupplierID;INT;pk|CompanyName;NVARCHAR(40)|ContactName;NVARCHAR(30)|ContactTitle;NVARCHAR(30)|Address;NVARCHAR(60)|City;NVARCHAR(15)|Region;NVARCHAR(15)|PostalCode;NVARCHAR(10)|Country;NVARCHAR(15)|Phone;NVARCHAR(24)|Fax;NVARCHAR(24)|HomePage;NTEXT") },
];
const EntityBox = styled.section<{ $x: number; $y: number; $w: number; $h: number }>`
  position: absolute;
  left: ${(p) => p.$x}px;
  top: ${(p) => p.$y}px;
  width: ${(p) => p.$w}px;
  height: ${(p) => p.$h}px;
  display: flex;
  flex-direction: column;
  border: 1px solid #0a3a0a;
  background: ${LIME};
  color: #001a00;
`;
const EntityTitle = styled.h3`
  flex: none;
  margin: 0;
  height: 12px;
  display: flex;
  justify-content: center;
  overflow: hidden;
  border-bottom: 1px solid #0a3a0a;
  font: bold ${TEXT} / 11px ${FONT};
  color: #000;
`;
const EntityBody = styled.div`
  flex: 1;
  min-height: 0;
  display: flex;
  flex-direction: column;
  padding: 1px 0 0 1px;
`;
const EntityRow = styled.div<{ $u?: boolean }>`
  flex: 1 1 0;
  min-height: 0;
  display: flex;
  align-items: center;
  text-decoration: ${(p) => (p.$u ? "underline" : "none")};
`;
const EntityName = styled.span<{ $w: number }>`
  flex: none;
  width: ${(p) => p.$w}px;
  text-decoration: inherit;
`;
const EntityType = styled.span<{ $w?: number }>`
  flex: none;
  ${(p) => p.$w && `width: ${p.$w}px;`}
  overflow: hidden;
  text-decoration: inherit;
`;
const EntityFlag = styled.span`
  margin-left: auto;
  text-decoration: inherit;
`;
const EntityFoot = styled.div<{ $u?: boolean }>`
  flex: none;
  height: 13px;
  display: flex;
  padding-left: 1px;
  border-top: 1px solid #0a3a0a;
  line-height: 10px;
  text-decoration: ${(p) => (p.$u ? "underline" : "none")};
`;
const Handle = styled.span<{ $r?: boolean; $b?: boolean }>`
  position: absolute;
  width: 5px;
  height: 5px;
  ${(p) => (p.$r ? "right: -3px;" : "left: -3px;")}
  ${(p) => (p.$b ? "bottom: -3px;" : "top: -3px;")}
  border: 1px solid #063;
  background: #2fb62f;
`;
const EntityCard = ({ e }: { e: Entity }) => (
  <EntityBox $x={e.x} $y={e.y} $w={e.w} $h={e.h}>
    <EntityTitle>{e.t}</EntityTitle>
    <EntityBody>
      {e.rows.map(([n, ty, f], i) => (
        <EntityRow key={i} $u={!!f && f.startsWith("pk")}>
          <EntityName $w={e.tx - 2}>{n}</EntityName>
          <EntityType $w={e.tw}>{ty}</EntityType>
          {f && <EntityFlag>{f}</EntityFlag>}
        </EntityRow>
      ))}
    </EntityBody>
    <EntityFoot $u={e.wideKey}>
      <span>{e.t}_pk</span>
      <EntityFlag>pk</EntityFlag>
    </EntityFoot>
    {e.sel && (
      <>
        <Handle />
        <Handle $r />
        <Handle $b />
        <Handle $r $b />
      </>
    )}
  </EntityBox>
);

type ViewSpec = { t: string; x: number; y: number; w: number; h: number; r: string; a: string[]; b?: string[] };
const views: ViewSpec[] = [
  { t: "Alphabetical list of products", x: 553, y: 581, w: 98, h: 90, r: "12px", a: ["Products.*"] },
  { t: "Category Sales for 1997", x: 666, y: 581, w: 222, h: 90, r: "30px / 14px", a: ['"Product Sales for 1997".CategoryName'] },
  { t: "Current Product List", x: 903, y: 581, w: 97, h: 90, r: "12px", a: ["Product_List.ProductID"] },
  { t: "Customer and Suppliers by City", x: 248, y: 763, w: 116, h: 112, r: "16px", a: ["City", "CompanyName", "ContactName", "'Customers' AS Relationship"], b: ["Customers", "CompanyName", "ContactName", "CompanyName"] },
  { t: "Invoices", x: 379, y: 763, w: 272, h: 600, r: "31px / 36px", a: ["Orders.ShipName", "Orders.ShipAddress", "Orders.ShipCity", "Orders.ShipRegion", "Orders.ShipPostalCode", "Orders.ShipCountry", "Orders.CustomerID", "Customers.CompanyName AS CustomerName", "Customers.Address", "Customers.City", "Customers.Region"] },
  { t: "Order Subtotals", x: 948, y: 763, w: 254, h: 53, r: "14px", a: [] },
];
const ViewBox = styled.section<{ $x: number; $y: number; $w: number; $h: number; $r: string }>`
  position: absolute;
  left: ${(p) => p.$x}px;
  top: ${(p) => p.$y}px;
  width: ${(p) => p.$w}px;
  height: ${(p) => p.$h}px;
  border: 1px solid #333;
  border-radius: ${(p) => p.$r};
  background: #fff;
`;
const ViewTitle = styled.h3`
  margin: 0;
  height: 13px;
  display: flex;
  justify-content: center;
  overflow: hidden;
  border-bottom: 1px solid #333;
  font: bold ${TEXT} / 12px ${FONT};
  color: #000;
`;
const ViewRows = styled.div<{ $h: number; $line?: boolean }>`
  display: flex;
  flex-direction: column;
  height: ${(p) => p.$h}px;
  border-top: ${(p) => (p.$line ? "1px solid #333" : "0")};
`;
const ViewRow = styled.span`
  flex: 1 1 0;
  min-height: 0;
`;
const ViewCard = ({ v }: { v: ViewSpec }) => (
  <ViewBox $x={v.x} $y={v.y} $w={v.w} $h={v.h} $r={v.r}>
    <ViewTitle>{v.t}</ViewTitle>
    <ViewRows $h={Math.round(v.a.length * 11.7)}>
      {v.a.map((r, i) => <ViewRow key={i}>{r}</ViewRow>)}
    </ViewRows>
    {v.b && (
      <ViewRows $h={48} $line>
        {v.b.map((r, i) => <ViewRow key={i}>{r}</ViewRow>)}
      </ViewRows>
    )}
  </ViewBox>
);

const links = [
  "349,241 345,199", "532,248 524,188", "595,250 661,225", "718,365 722,279", "933,245 838,283 819,195 933,181",
  "781,409 933,292", "781,447 928,419", "1146,299 1068,269", "1205,350 1203,400", "1205,461 1209,511",
  "447,419 417,384", "532,461 648,461", "351,385 345,572",
];
const linkLabels: [string, number, number][] = [
  ["CategoryID = CategoryID", 347, 228], ["CustomerTypeID = CustomerTypeID", 527, 208], ["CustomerID = CustomerID", 621, 228],
  ["CustomerID = CustomerID", 720, 321], ["ReportsTo = EmployeeID", 843, 218], ["EmployeeID = EmployeeID", 842, 342],
  ["ShipVia = ShipperID", 840, 424], ["EmployeeID = EmployeeID", 1092, 274], ["TerritoryID = TerritoryID", 1204, 368],
  ["RegionID = RegionID", 1206, 475], ["ProductID = ProductID", 412, 378], ["OrderID = OrderID", 588, 452],
  ["SupplierID = SupplierID", 347, 475],
];
const LinkLabel = styled.span<{ $x: number; $y: number }>`
  position: absolute;
  left: ${(p) => p.$x}px;
  top: ${(p) => p.$y}px;
  line-height: 12px;
`;

const Diagram = () => (
  <Viewport>
    <Scene>
      <SceneSvg width="1400" height="1050" aria-hidden="true">
        <defs>
          <marker id="tip" markerWidth="10" markerHeight="8" refX="9" refY="4" orient="auto" markerUnits="userSpaceOnUse">
            <path d="M0 0.500L9 4 0 7.500z" fill="#000" />
          </marker>
        </defs>
        <g stroke="#b4b4b4" strokeDasharray="3 3">
          {steps(277, 1400, 36.5).map((x) => <path key={x} d={`M${x} 117V1050`} />)}
          {steps(153, 1050, 36.4).map((y) => <path key={y} d={`M241 ${y}H1400`} />)}
        </g>
        <path d="M240.500 1050V116.500H1400" fill="none" stroke="#222" />
        <path d="M796 116V1050" stroke="#111" strokeWidth="2" />
      </SceneSvg>
      {views.map((v) => <ViewCard key={v.t} v={v} />)}
      <LinkLabel $x={1122} $y={800}>00))"100) AS Subtotal</LinkLabel>
      {entities.map((e) => <EntityCard key={e.t} e={e} />)}
      <SceneSvg width="1400" height="1050" aria-hidden="true">
        {links.map((pts) => <polyline key={pts} points={pts} fill="none" stroke="#222" markerEnd="url(#tip)" />)}
        <path d="M712 457l5 5M717 457l-5 5" stroke="#1a6a8a" />
      </SceneSvg>
      {linkLabels.map(([t, x, y]) => <LinkLabel key={`${x}-${y}`} $x={x} $y={y}>{t}</LinkLabel>)}
    </Scene>
  </Viewport>
);

/* ---------- right dock ---------- */
const RightDock = styled.aside`
  flex: none;
  width: 122px;
  display: flex;
  flex-direction: column;
  padding-bottom: 9px;
`;
const SlantHead = styled.h3<{ $on?: boolean }>`
  flex: none;
  height: 13px;
  margin: 0 0 ${(p) => (p.$on ? 0 : 1)}px;
  display: flex;
  background: ${(p) => (p.$on ? "#fff" : BEIGE)};
  font: ${(p) => (p.$on ? "bold " : "")}${TEXT} / 13px ${FONT};
  svg { flex: none; display: block; }
`;
const SlantLabel = styled.button`
  flex: 1;
  text-align: left;
  padding-left: 2px;
  border-top: 1px solid #8e8b7a;
`;
const Head = ({ t, on, upper }: { t: string; on?: boolean; upper: string }) => (
  <SlantHead $on={on}>
    <SlantLabel>{t}</SlantLabel>
    <svg width="25" height="13" aria-hidden="true">
      <path d="M0 0L12 12.500H25V0z" fill={upper} />
      <path d="M0 .5L12 12.500H25" fill="none" stroke="#8e8b7a" />
    </svg>
  </SlantHead>
);
const ToolList = styled.div`
  flex: 187 1 0;
  min-height: 0;
  overflow: hidden;
  display: flex;
  flex-direction: column;
  gap: 1px;
  padding-top: 2px;
  background: #fff;
`;
const ToolPick = styled.button`
  display: flex;
  align-items: center;
  gap: 2px;
  height: 14px;
  padding-left: 5px;
`;
const PropPanel = styled(Panel)`
  flex: 230 1 0;
  overflow: hidden;
`;
const PropHead = styled.div`
  flex: none;
  display: grid;
  grid-template-columns: 55px 1fr;
  height: 13px;
  background: #ebeadb;
  border-bottom: 1px solid #d5d1bf;
`;
const PropTitle = styled.span`
  padding-left: 3px;
  & + & { border-left: 1px solid #cbc7b3; }
`;
const PropBody = styled.div`
  padding-left: 4px;
`;
const PropList = styled.ul`
  height: 152px;
  display: flex;
  flex-direction: column;
`;
const PropRow = styled.li`
  flex: 1 1 0;
  min-height: 0;
  display: grid;
  grid-template-columns: 53px 1fr;
  align-items: center;
`;
const PropName = styled.span`
  display: flex;
  align-items: center;
`;
const PropValue = styled.span`
  display: flex;
  align-items: center;
  gap: 1px;
`;
const props: [string, boolean, React.ReactNode][] = [
  ["Code", false, null],
  ["geometry", true, "[ 569, 352, 752,..."],
  ["defaultText", false, "Description"],
  ["wrap", false, "True"],
  ["clip", false, "True"],
  ["Comment", false, null],
  ["name", false, "Orders"],
  ["fillStyle", false, <><Swatch $c="#000" $w={29} />Solid</>],
  ["fillColor", true, <Swatch $c={LIME} $w={29} />],
  ["lineStyle", false, <><svg width="29" height="9" aria-hidden="true"><path d="M0 1l29 7" stroke="#222" /></svg>Solid</>],
  ["lineColor", true, <Swatch $c="#000" $w={29} />],
  ["fontColor", true, <Swatch $c="#000" $w={29} />],
  ["font", true, "MS Shell Dlg 8"],
];
const PannerBox = styled.div`
  flex: 328 1 0;
  min-height: 0;
  background: #fff;
  svg { display: block; width: 100%; height: 100%; }
`;
const miniTables = [
  [54, 226, 43, 46], [113, 234, 40, 31], [178, 224, 43, 98], [266, 226, 45, 146], [343, 232, 37, 66], [56, 297, 44, 91], [118, 301, 40, 34],
  [104, 408, 33, 54], [175, 376, 44, 117], [266, 381, 41, 39], [336, 334, 39, 31], [332, 396, 46, 41], [336, 466, 42, 31], [54, 502, 42, 104],
];
const miniViews = [
  [143, 509, 33, 26], [181, 509, 72, 26], [256, 509, 33, 32], [43, 622, 38, 67], [87, 622, 88, 205], [178, 622, 90, 67], [272, 622, 83, 34],
  [43, 836, 31, 156], [78, 836, 88, 42], [172, 836, 35, 33], [211, 836, 31, 48], [247, 836, 40, 42], [43, 1000, 73, 43], [121, 1000, 49, 43],
  [174, 1000, 35, 34], [213, 1000, 32, 34], [249, 1002, 17, 11], [270, 1000, 29, 63],
];
const Panner = () => (
  <PannerBox>
    <svg viewBox="39 217 366 990" preserveAspectRatio="none" role="img" aria-label="Diagram overview">
      <path d="M41 220H404V1205H41zM222 220V1205M41 712H404" fill="none" stroke="#111" strokeWidth="3" />
      <g stroke="#333" strokeWidth="2.500" fill="none">
        <path d="M76 297V272M135 301L132 265M158 305L178 290M196 376V322M266 303L236 322 229 270 266 261M219 400L266 332M219 428L266 408M336 334L311 315M355 365V396M355 437V466M108 408L97 388M137 436H175M78 388V502" />
      </g>
      {miniTables.map(([x, y, w, h], i) => (
        <g key={i}>
          <rect x={x} y={y} width={w} height={h} fill="#08dd08" stroke="#063f06" strokeWidth="3" />
          <path d={`M${x} ${y + 7}h${w}M${x} ${y + h - 8}h${w}`} stroke="#063f06" strokeWidth="3" />
          {steps(y + 14, y + h - 9, 6).map((v) => <path key={v} d={`M${x + 4} ${v}h${w * 0.7}`} stroke="#067a06" strokeWidth="2" strokeDasharray="9 3 14 2" />)}
        </g>
      ))}
      {miniViews.map(([x, y, w, h], i) => (
        <g key={i}>
          <rect x={x} y={y} width={w} height={h} rx="8" fill="#fff" stroke="#222" strokeWidth="3" />
          <path d={`M${x} ${y + 6}h${w}`} stroke="#222" strokeWidth="3" />
          {steps(y + 13, y + h - 5, 7).map((v, k) => <path key={v} d={`M${x + 4} ${v}h${Math.min(w - 8, 14 + ((k * 7) % 20))}`} stroke="#555" strokeWidth="2.500" strokeDasharray="6 1 3 1" />)}
        </g>
      ))}
      <rect x="40" y="218" width="334" height="493" fill="none" stroke="#e02020" strokeWidth="3" />
    </svg>
  </PannerBox>
);

/* ---------- output ---------- */
const Output = styled.section`
  flex: none;
  height: 117px;
  display: grid;
  grid-template: 20px 84px 13px / 14px 1fr;
`;
const FindBar = styled.form`
  grid-column: 1 / 3;
  display: flex;
  align-items: center;
  padding-left: 2px;
  gap: 4px;
`;
const FindLabel = styled.label`
  display: flex;
  align-items: center;
  gap: 3px;
`;
const TextInput = styled.input<{ $w: number }>`
  width: ${(p) => p.$w}px;
  height: 13px;
  padding-left: 2px;
  border: 1px solid ${EDGE};
  background: #fff;
`;
const SquareButton = styled.button`
  width: 21px;
  height: 16px;
  margin-left: 1px;
  display: flex;
  align-items: center;
  justify-content: center;
  border: 1px solid #44648c;
  border-radius: 2px;
  background: #f4f3ec;
`;
const SideLabel = styled.span`
  grid-row: 2 / 4;
  writing-mode: vertical-rl;
  transform: rotate(180deg);
  padding-top: 2px;
  line-height: 14px;
`;
const OutFrame = styled.div`
  display: flex;
  border: 1px solid ${EDGE};
  border-right: 0;
  background: #fff;
`;
const OutList = styled.ul`
  flex: 1;
  display: flex;
  flex-direction: column;
`;
const OutRow = styled.li<{ $sel?: boolean; $key?: boolean }>`
  flex: 1 1 0;
  min-height: 0;
  display: flex;
  align-items: center;
  gap: ${(p) => (p.$key ? 3 : 1)}px;
  padding-left: 3px;
  background: ${(p) => (p.$sel ? BEIGE : "transparent")};
`;
const outRows: [string, string][] = [
  ["table", "Order Details"], ["keyGold", "Order Details_pk"], ["keyGold", "OrderID"], ["zig", "OrderID"],
  ["column", "OrderID"], ["zig", "OrdersOrder_Details"], ["column", "OrderID"],
];
const StatusBar = styled.footer`
  flex: none;
  height: 12px;
  display: flex;
  align-items: center;
  padding-left: 2px;
`;
const StatusCell = styled.span<{ $w: number }>`
  flex: none;
  width: ${(p) => p.$w}px;
  height: 12px;
  padding-left: 3px;
  border-left: 1px solid #d3cfbc;
`;

/* ---------- dialogs ---------- */
const DialogBox = styled.div<{ $x: number; $y: number; $w: number; $h: number; $on?: boolean }>`
  position: absolute;
  left: ${(p) => p.$x}px;
  top: ${(p) => p.$y}px;
  width: ${(p) => p.$w}px;
  height: ${(p) => p.$h}px;
  display: flex;
  flex-direction: column;
  border: 3px solid ${(p) => (p.$on ? "#0a3fd0" : "#6d83d8")};
  border-top: 0;
  border-radius: 5px 5px 0 0;
  overflow: hidden;
  background: ${BEIGE};
`;
const DialogTitle = styled.h2<{ $on?: boolean }>`
  flex: none;
  height: 21px;
  margin: 0;
  padding: 0 1px 0 2px;
  display: flex;
  align-items: center;
  gap: 3px;
  font: bold 10px / 14px ${FONT};
  color: ${(p) => (p.$on ? "#fff" : "#d5dff8")};
  background: ${(p) => (p.$on ? "linear-gradient(#0a4fd0, #2f7cf8 12%, #0a56e4 35%, #0758ee 85%, #0545c8)" : "linear-gradient(#6d83d8, #92a9ee 12%, #7a93e0 40%, #7f9ce8 90%, #6d83d8)")};
`;
const Mark = styled.span`
  font: bold 12px / 12px ${FONT};
  color: #fff;
`;
const DTabs = styled.div`
  flex: none;
  height: 17px;
  padding: 2px 1px 0 0;
  display: flex;
  gap: 1px;
  border-bottom: 1px solid #a3a796;
`;
const DTab = styled.button<{ $on?: boolean }>`
  height: ${(p) => (p.$on ? 17 : 14)}px;
  margin-top: ${(p) => (p.$on ? -2 : 0)}px;
  padding: 0 6px;
  border: 1px solid #a9ad9c;
  border-bottom: 0;
  border-top: ${(p) => (p.$on ? "2px solid #eda13a" : "1px solid #a9ad9c")};
  border-radius: 3px 3px 0 0;
  background: ${(p) => (p.$on ? "#fcfcfe" : "linear-gradient(#fff, #f0efe4)")};
  line-height: 12px;
`;
const Focused = styled.span`
  outline: 1px dotted #555;
`;
const Sheet = styled.div`
  flex: 1;
  min-height: 0;
  display: flex;
  flex-direction: column;
  background: #fff;
`;
const MiniBar = styled.div`
  flex: none;
  align-self: flex-start;
  height: 17px;
  padding-right: 3px;
  display: flex;
  align-items: center;
  background: ${BEIGE};
`;
const GridArea = styled.div`
  flex: none;
  height: 146px;
  display: flex;
  border-top: 1px solid ${EDGE};
  border-bottom: 1px solid ${EDGE};
`;
const Filler = styled.div`
  flex: 1;
  background: ${BEIGE};
`;
const DataTable = styled.table`
  width: 548px;
  height: 100%;
  table-layout: fixed;
  border-collapse: collapse;
  th, td { padding: 0 0 0 2px; overflow: hidden; font-weight: normal; text-align: left; border-right: 1px solid #c9c7ba; border-bottom: 1px solid #c9c7ba; line-height: 12px; }
  thead th { padding-left: 3px; height: 14px; background: #ebeadb; }
  thead th:nth-child(2) { font-weight: bold; }
  thead th:first-child { background: #fff; }
  tbody th { padding-left: 3px; background: #ebeadb; }
  td.num { text-align: right; }
`;
const heads = ["", "Name", "Code", "Domain", "Type", "Length", "Precision1", "Precision2", "Scale", "Default", "Mandatory", "Primary Key", "Foreign Key"];
const widths = [21, 73, 41, 41, 41, 41, 41, 41, 41, 41, 41, 41, 44];
const dataRows = [
  "OrderID;;;INT;;10;;0;;*;*;", "CustomerID;;;NCHAR;5;;;;;;;*", "EmployeeID;;;INT;;10;;0;;;;*", "OrderDate;;;DATETIME;;23;;3;;;;",
  "RequiredDate;;;DATETIME;;23;;3;;;;", "ShippedDate;;;DATETIME;;23;;3;;;;", "ShipVia;;;INT;;10;;0;;;;*", "Freight;;;MONEY;;19;;4;;;;", "ShipName;;;NVARCHAR;40;;;;;;;",
].map((r) => r.split(";"));

const Form = styled.div`
  flex: 1;
  min-height: 0;
  display: flex;
  flex-direction: column;
  padding: 6px 8px 7px;
  background: linear-gradient(#fcfcfe, #f6f5ee);
`;
const Field = styled.label`
  display: flex;
  align-items: center;
  height: 15px;
  margin-bottom: 5px;
`;
const FieldName = styled.span`
  width: 44px;
`;
const Group = styled.fieldset`
  height: 28px;
  margin: 0 0 8px;
  padding: 0;
  border: 1px solid #d5d2be;
  border-radius: 3px;
  display: flex;
  justify-content: center;
  align-items: flex-start;
`;
const Legend = styled.legend`
  margin-left: 3px;
  padding: 0 2px;
  line-height: 12px;
  color: #1c4bc0;
`;
const ArgLine = styled.label`
  display: flex;
  align-items: center;
  justify-content: center;
  gap: 7px;
  margin-top: -4px;
  font-weight: bold;
  input { font-weight: normal; }
`;
const InfoBox = styled.div`
  flex: 1;
  padding: 3px;
  border: 1px solid ${EDGE};
  background: #fff;
`;
const InfoHead = styled.div`
  display: flex;
  align-items: center;
  gap: 3px;
  height: 14px;
  margin-bottom: 6px;
  font-weight: bold;
`;
const Actions = styled.div`
  flex: none;
  height: 26px;
  display: flex;
  align-items: center;
  justify-content: flex-end;
  gap: 3px;
  padding-right: 4px;
  border-top: 1px solid #a3a796;
`;
const PushButton = styled.button<{ $main?: boolean }>`
  width: 58px;
  height: 16px;
  border: 1px solid #1f4477;
  border-radius: 2px;
  background: linear-gradient(#fff, #f0efe6);
  box-shadow: ${(p) => (p.$main ? "inset 0 0 0 1px #a9c3f2" : "none")};
`;
const WhiteX = () => (
  <svg width="10" height="10" viewBox="0 0 10 10" aria-hidden="true"><path d="M1.500 1.500l7 7M8.500 1.500l-7 7" stroke="#fff" strokeWidth="1.800" /></svg>
);
const Caption = ({ icon, text, on }: { icon: string; text: string; on?: boolean }) => (
  <DialogTitle $on={on}>
    <Icon name={icon} size={12} />
    {text}
    <Spacer />
    <WinButton aria-label="Help" $tone={on ? "#2f62dc" : "#5274d8"}><Mark>?</Mark></WinButton>
    <WinButton aria-label="Close" $tone={on ? "#dc4a26" : "#bd6f80"}><WhiteX /></WinButton>
  </DialogTitle>
);
const Tabs = ({ names, on, focus }: { names: string; on: string; focus?: boolean }) => (
  <DTabs>
    {names.split("|").map((n) => (
      <DTab key={n} $on={n === on}>{n === on && focus ? <Focused>{n}</Focused> : n}</DTab>
    ))}
  </DTabs>
);

export default function App() {
  return (
    <Shell>
      <Global />
      <TitleBar>
        <Icon name="logo" size={12} />
        <TitleText>Open System Architect 4.0.0</TitleText>
        <WinButton $w={10} $tone="#1f5fd8" aria-label="Menu">
          <svg width="6" height="6" aria-hidden="true"><path d="M0 1h6L3 4z" fill="#fff" /></svg>
        </WinButton>
        <Gap $w={17} />
        <WinButton aria-label="Minimize"><svg width="8" height="8" aria-hidden="true"><path d="M1 6h4v2H1z" fill="#fff" /></svg></WinButton>
        <WinButton aria-label="Restore">
          <svg width="9" height="9" aria-hidden="true"><path d="M3.500 3V1.500h4v4H6M1.500 3.500h4v4h-4z" fill="none" stroke="#fff" /></svg>
        </WinButton>
        <WinButton $tone="#b9707c" aria-label="Close window"><WhiteX /></WinButton>
      </TitleBar>
      <MenuBar>
        {"File|Edit|Search|View|Tools|Model|Symbol|Database|Data Source|Result|Window|Help".split("|").map((m) => <button key={m}>{m}</button>)}
      </MenuBar>

      <ToolRow $h={22} $line>
        <Grip />
        <Tools names="newDoc open save print" w={20} />
        <Grip />
        <Tools names="undo redo cut copy paste" />
        <Divider />
        <Tools names="del" />
        <Divider />
        <Tools names="indent indent" />
        <Divider />
        <Tools names="winGreen winWhite" />
        <Divider />
        <Tools names="outline outline" />
        <Grip />
        <Tools names="fontColor" />
        <Tools names="down" w={9} />
        <Combo w={114} label="Font" value="MS Shell Dlg" />
        <Spin w={33} label="Font size" value="8" />
        <Tools names="bold italic underline strike" />
        <Grip />
        <Tools names="brush" />
        <Tools names="down" w={9} />
        <Combo w={105} label="Line style" value="Solid" lead={<svg width="42" height="3" aria-hidden="true"><path d="M1 1.500h41" stroke="#222" /></svg>} />
        <Spin w={34} label="Line width" value="1" />
        <Grip />
        <Tools names="bucket" />
        <Tools names="down" w={9} />
        <Combo w={70} label="Fill style" value="Solid" lead={<Swatch $c="#000" />} />
        <Grip />
        <Tools names="zoomIn zoomOut" />
        <Combo w={44} label="Zoom" value="100%" />
        <Grip />
        <Tools names="txtLeft txtMid txtRight" w={17} on="txtMid" />
        <Divider />
        <Tools names="vTop vMid vBot" w={17} on="vMid" />
        <Grip />
        <Tools names="front back" />
        <Grip />
        <Tools names="aLeft aMidH aRight" />
        <Divider />
        <Tools names="aTop aCenter aBottom" />
        <Grip />
        <Tools names="pointer" w={18} on="pointer" />
        <Grip />
        <Tools names="text title line arc rect ellipse image" />
      </ToolRow>
      <ToolRow $h={21}>
        <Grip />
        <Tools names="table tableGrey view link linkGrey ticket bar gridGrey gear" />
        <Grip $w={10} />
        <Tools names="gSquare gFlag gCircle gFunnel gDome gStep gWide barGrey gBlob" />
        <Grip $w={10} />
        <Tools names="compile rulers relCheck relGrey relPurple" w={17} />
        <Grip $w={10} />
        <Tools names="dbNew dbRev" w={17} />
        <Grip $w={10} />
        <Tools names="person person" />
        <Divider />
        <Tools names="gCan gSquare gCircle gCan gZig keyGrey" />
        <Tools names="keyGrey gSquare bug bug gCan" w={17} />
        <Divider />
        <Tools names="odbc" />
      </ToolRow>

      <Main>
        <LeftDock>
          <Dock title="Browser" />
          <Panel>
            <PanelHead>Name</PanelHead>
            <TreeScroll><TreeList items={tree} /></TreeScroll>
            <ScrollBar part={36} />
          </Panel>
          <TabStrip>
            <BottomTab $on><Icon name="cube" size={12} />Workspace</BottomTab>
            <BottomTab><Icon name="odbc" size={12} />ODBC</BottomTab>
          </TabStrip>
        </LeftDock>

        <Center>
          <DocTabs>
            <DocTab $on>Northwind</DocTab>
            <DocTab>AllOrders</DocTab>
            <Spacer />
            <IconButton aria-label="Previous"><Icon name="prev" size={9} /></IconButton>
            <IconButton aria-label="Next"><Icon name="next" size={9} /></IconButton>
            <Gap $w={2} />
            <IconButton aria-label="Close document"><Icon name="close" size={9} /></IconButton>
          </DocTabs>
          <Drawing>
            <span />
            <RulerSvg aria-hidden="true">
              <path d={ticks(1030, (v, l) => `M${v} ${l ? 5 : 8}V11`)} stroke="#222" />
              <path d="M458 4h7l-3.500 6z" fill={BEIGE} stroke="#222" />
            </RulerSvg>
            <RulerSvg aria-hidden="true">
              <path d={ticks(800, (v, l) => `M${l ? 9 : 12} ${v}H16`)} stroke="#222" />
              <path d="M10 410l5 3.500-5 3.500z" fill={BEIGE} stroke="#222" />
            </RulerSvg>
            <CanvasFrame>
              <Diagram />
              <ScrollBar v part={50} />
              <ScrollBar part={91} />
            </CanvasFrame>
          </Drawing>
        </Center>

        <RightDock>
          <Dock title="Tools" />
          <Head t="Diagram" on upper={BEIGE} />
          <ToolList>
            {[["text", "Text"], ["title", "Title"], ["line", "Line"], ["arc", "Arc"], ["rect", "Rectangle"], ["image", "Image"], ["ellipse", "Ellipse"]].map(([i, t]) => (
              <ToolPick key={t}><Icon name={i} size={12} />{t}</ToolPick>
            ))}
          </ToolList>
          <Head t="Physical Model" upper="#fff" />
          <Head t="Logical Model" upper={BEIGE} />
          <Dock title="Properties" />
          <PropPanel>
            <PropHead><PropTitle>Name</PropTitle><PropTitle>Value</PropTitle></PropHead>
            <PropBody>
              <PropList>
                {props.map(([n, more, v]) => (
                  <PropRow key={n}>
                    <PropName>
                      {more ? <Expander aria-label={n} aria-expanded={false} /> : <Gap $w={4} />}
                      {more ? <Gap $w={3} /> : <Twig />}
                      {n}
                    </PropName>
                    <PropValue>{v}</PropValue>
                  </PropRow>
                ))}
              </PropList>
            </PropBody>
          </PropPanel>
          <Dock title="Panner" />
          <Panner />
        </RightDock>
      </Main>

      <Output>
        <FindBar>
          <IconButton type="button" aria-label="Close output"><Icon name="close" size={9} /></IconButton>
          <FindLabel>Find<TextInput $w={64} defaultValue="Order" /></FindLabel>
          <SquareButton type="button" aria-label="Find"><Icon name="find" size={13} /></SquareButton>
          <SquareButton type="button" aria-label="Find options"><Icon name="findCfg" size={12} /></SquareButton>
        </FindBar>
        <SideLabel>Output</SideLabel>
        <OutFrame>
          <OutList>
            {outRows.map(([ic, t], i) => (
              <OutRow key={i} $sel={i === 0} $key={ic === "keyGold"}><Icon name={ic} size={12} />11:30:48.343 {t}</OutRow>
            ))}
          </OutList>
          <ScrollBar v part={12} />
        </OutFrame>
        <TabStrip>
          <BottomTab $on><Icon name="find" size={12} />Find 81</BottomTab>
          <BottomTab><Icon name="info" size={12} />General 0</BottomTab>
          <BottomTab><Icon name="relCheck" size={12} />Validation 0</BottomTab>
          <BottomTab><Icon name="dbNew" size={12} />Generation 0</BottomTab>
          <BottomTab><Icon name="dbRev" size={12} />Reverse 0</BottomTab>
          <BottomTab><Icon name="odbc" size={12} />ODBC 0</BottomTab>
        </TabStrip>
      </Output>
      <StatusBar>
        Rows: 0&nbsp; Cols: 14
        <Spacer />
        <StatusCell $w={78} />
        <StatusCell $w={79} />
        <StatusCell $w={79}>Rows: 0</StatusCell>
        <StatusCell $w={79}>Cols: 0</StatusCell>
        <StatusCell $w={82}>0 secs</StatusCell>
        <StatusCell $w={79}>Line: 0</StatusCell>
        <StatusCell $w={79}>Col: 0</StatusCell>
        <StatusCell $w={82}>INS</StatusCell>
      </StatusBar>

      <DialogBox role="dialog" aria-label="Table (Orders)" $x={526} $y={600} $w={569} $h={232}>
        <Caption icon="table" text="Table (Orders)" />
        <Tabs names="General|Columns|Indexes|Keys|Additional Checks|Preview|Options|Notes|Rules|Fill|Line|Font|Used By" on="Columns" />
        <Sheet>
          <MiniBar>
            <Grip />
            <Tools names="sheetNew sheetEdit sheetDel sheetUp sheetDown" w={17} />
          </MiniBar>
          <GridArea>
            <DataTable>
              <colgroup>{widths.map((w, i) => <col key={i} width={w} />)}</colgroup>
              <thead><tr>{heads.map((h) => <th key={h} scope="col">{h}</th>)}</tr></thead>
              <tbody>
                {dataRows.map((r, i) => (
                  <tr key={r[0]}>
                    <th scope="row">{i === 1 ? <b>2</b> : i + 1}</th>
                    {r.map((c, k) => <td key={k} className={k > 3 && k < 8 ? "num" : undefined}>{c}</td>)}
                  </tr>
                ))}
              </tbody>
            </DataTable>
            <ScrollBar v part={65} />
          </GridArea>
          <Filler />
        </Sheet>
      </DialogBox>

      <DialogBox role="dialog" aria-label="Column (CustomerID)" $on $x={661} $y={758} $w={462} $h={233}>
        <Caption icon="keyBlack" text="Column (CustomerID)" on />
        <Tabs names="General|Data Type|Checks|Values|Additional Checks|Preview|Notes|Rules|Used By" on="Data Type" focus />
        <Form>
          <Field><FieldName>Domain</FieldName><Combo w={157} label="Domain" value="" /></Field>
          <Field><FieldName>Data Type</FieldName><Combo w={157} label="Data Type" value="NCHAR(n)" /></Field>
          <Group>
            <Legend>Arguments</Legend>
            <ArgLine>NCHAR(<TextInput $w={64} defaultValue="5" />)</ArgLine>
          </Group>
          <InfoBox>
            <InfoHead><Icon name="info" size={12} />NCHAR(n)</InfoHead>
            Fixed-length Unicode data with a maximum length of 4,000 characters.
          </InfoBox>
        </Form>
        <Actions>
          <PushButton $main>Ok</PushButton>
          <PushButton>Apply</PushButton>
          <PushButton>Cancel</PushButton>
        </Actions>
      </DialogBox>
    </Shell>
  );
}
